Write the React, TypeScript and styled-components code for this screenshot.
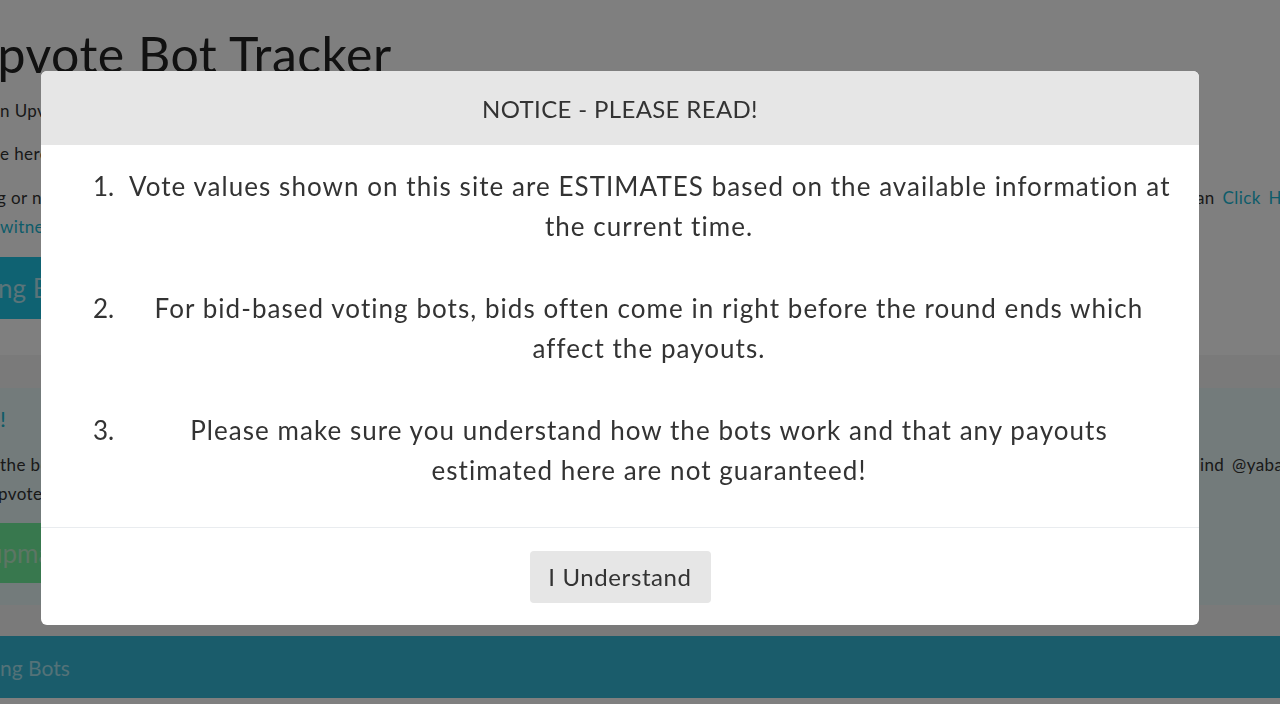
import React from 'react';
import styled, { createGlobalStyle } from 'styled-components';

const GlobalStyle = createGlobalStyle`
  html, body {
    margin: 0;
    padding: 0;
    width: 1280px;
    height: 704px;
    overflow: hidden;
    background: #ffffff;
    font-family: Lato, "Open Sans", "Noto Sans", sans-serif;
    color: #333333;
  }
  * { box-sizing: border-box; }
`;

const Page = styled.div`
  display: flex;
  flex-direction: column;
  width: 1280px;
  height: 704px;
`;

const Hero = styled.section`
  display: flex;
  flex-direction: column;
  height: 355px;
  padding-top: 22px;
  background: #ffffff;
`;

const Title = styled.h1`
  margin: 0 0 0 -39px;
  font-size: 50px;
  font-weight: 400;
  letter-spacing: 0.5px;
  line-height: 64px;
  color: #222222;
  white-space: nowrap;
`;

const Line = styled.div<{ $gap?: number }>`
  display: flex;
  justify-content: space-between;
  align-items: center;
  height: 29px;
  margin-top: ${(p) => p.$gap ?? 0}px;
  font-size: 17px;
  letter-spacing: 0.4px;
  color: #333333;
  white-space: nowrap;
`;

const Fragment = styled.span<{ $shift?: number }>`
  margin-left: ${(p) => p.$shift ?? 0}px;
`;

const RightFragment = styled.span<{ $width: number }>`
  width: ${(p) => p.$width}px;
  overflow: hidden;
  word-spacing: 3px;
`;

const PageLink = styled.span`
  color: #1ab8d4;
`;

const PageButton = styled.div<{ $tone: 'info' | 'success'; $gap: number }>`
  display: flex;
  align-items: center;
  width: 41px;
  height: ${(p) => (p.$tone === 'info' ? 62 : 60)}px;
  margin-top: ${(p) => p.$gap}px;
  overflow: hidden;
  white-space: nowrap;
  font-size: 26px;
  color: ${(p) => (p.$tone === 'info' ? '#b4e8f2' : '#b8ecc8')};
  background: ${(p) => (p.$tone === 'info' ? '#1ec4e4' : '#70f09c')};
`;

const Band = styled.section`
  display: flex;
  flex-direction: column;
  height: 281px;
  padding-top: 33px;
  background: #f4f4f4;
`;

const Alert = styled.div`
  display: flex;
  flex-direction: column;
  height: 217px;
  padding-top: 16px;
  background: #e6f6f6;
`;

const AlertHeading = styled.div`
  font-size: 22px;
  line-height: 30px;
  color: #20b6d0;
`;

const BottomBar = styled.footer`
  display: flex;
  align-items: center;
  height: 62px;
  font-size: 21px;
  color: #a8e4f0;
  background: #34b8d6;
  white-space: nowrap;
`;

const Overlay = styled.div`
  position: fixed;
  inset: 0;
  display: flex;
  justify-content: center;
  align-items: flex-start;
  padding: 71px 40px 0 0;
  background: rgba(0, 0, 0, 0.5);
`;

const Modal = styled.div`
  display: flex;
  flex-direction: column;
  width: 1158px;
  background: #ffffff;
  border-radius: 6px;
  overflow: hidden;
`;

const ModalHeader = styled.div`
  display: flex;
  justify-content: center;
  align-items: center;
  height: 74px;
  background: #e6e6e6;
  font-size: 24px;
  letter-spacing: 0.35px;
  color: #333333;
`;

const ModalBody = styled.div`
  display: flex;
  flex-direction: column;
  gap: 42px;
  padding: 21px 30px 37px 52px;
`;

const Item = styled.div`
  display: grid;
  grid-template-columns: 19px 1040px;
  column-gap: 17px;
  font-size: 26px;
  line-height: 40px;
  color: #333333;
`;

const ItemNumber = styled.span`
  text-align: right;
`;

const ItemText = styled.p`
  margin: 0;
  text-align: center;
  letter-spacing: 1.05px;
  white-space: nowrap;
`;

const ModalFooter = styled.div`
  display: flex;
  justify-content: center;
  align-items: center;
  height: 98px;
  border-top: 1px solid #e9ecef;
`;

const Button = styled.button`
  width: 181px;
  height: 52px;
  border: none;
  border-radius: 4px;
  background: #e6e6e6;
  font-family: inherit;
  font-size: 24px;
  letter-spacing: 0.6px;
  color: #333333;
  cursor: pointer;
`;

const notices = [
  ['Vote values shown on this site are ESTIMATES based on the available information at', 'the current time.'],
  ['For bid-based voting bots, bids often come in right before the round ends which', 'affect the payouts.'],
  ['Please make sure you understand how the bots work and that any payouts', 'estimated here are not guaranteed!'],
];

export default function App() {
  return (
    <>
      <GlobalStyle />
      <Page>
        <Hero>
          <Title>Upvote Bot Tracker</Title>
          <Line $gap={10}>
            <Fragment>n Upvote bots and their current vote values</Fragment>
          </Line>
          <Line $gap={14}>
            <Fragment>e here to see the bots</Fragment>
          </Line>
          <Line $gap={15}>
            <Fragment $shift={-3}>g or not voting right now</Fragment>
            <RightFragment $width={84}>an <PageLink>Click Here</PageLink></RightFragment>
          </Line>
          <Line>
            <PageLink>witness</PageLink>
          </Line>
          <PageButton $tone="info" $gap={16}>
            <Fragment $shift={-2}>ng Bots</Fragment>
          </PageButton>
        </Hero>
        <Band>
          <Alert>
            <AlertHeading>!</AlertHeading>
            <Line $gap={16}>
              <Fragment>the bots</Fragment>
              <RightFragment $width={80}>ind @yabapmatt</RightFragment>
            </Line>
            <Line>
              <Fragment $shift={-2}>pvote</Fragment>
            </Line>
            <PageButton $tone="success" $gap={15}>
              <Fragment $shift={-12}>upmatt</Fragment>
            </PageButton>
          </Alert>
        </Band>
        <BottomBar>
          <span>ng Bots</span>
        </BottomBar>
      </Page>
      <Overlay>
        <Modal>
          <ModalHeader>NOTICE - PLEASE READ!</ModalHeader>
          <ModalBody>
            {notices.map(([first, second], i) => (
              <Item key={i}>
                <ItemNumber>{i + 1}.</ItemNumber>
                <ItemText>
                  {first}
                  <br />
                  {second}
                </ItemText>
              </Item>
            ))}
          </ModalBody>
          <ModalFooter>
            <Button>I Understand</Button>
          </ModalFooter>
        </Modal>
      </Overlay>
    </>
  );
}
